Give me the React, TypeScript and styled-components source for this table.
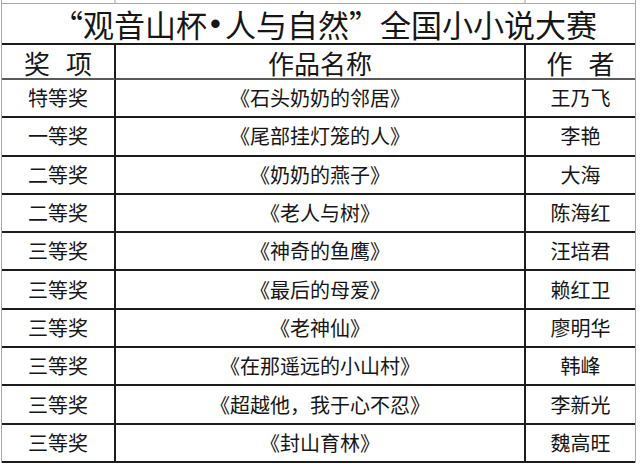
import { Fragment } from "react";
import styled, { createGlobalStyle } from "styled-components";

const GlobalStyle = createGlobalStyle`
  html, body {
    margin: 0;
    padding: 0;
    background: #ffffff;
  }
  body {
    width: 640px;
    height: 464px;
    overflow: hidden;
    font-family: "Noto Sans CJK SC", "Noto Sans", sans-serif;
    color: #161616;
  }
`;

const Sheet = styled.div`
  display: grid;
  grid-template-columns: 114px 410px 109px;
  grid-template-rows: 3px 42px 35px repeat(10, 38.3px);
  margin-left: 1px;
  width: 633px;
  border-left: 1px solid #a8a8a8;
  border-right: 1px solid #a8a8a8;
`;

const Sliver = styled.div<{ $last?: boolean }>`
  box-sizing: border-box;
  border-right: ${(p) => (p.$last ? "none" : "2px solid #d0d0d0")};
`;

const TitleCell = styled.div`
  grid-column: 1 / span 3;
  box-sizing: border-box;
  border-top: 1px solid #a8a8a8;
  border-bottom: 2px solid #1c1c1c;
  display: flex;
  align-items: center;
  justify-content: center;
  font-size: 31px;
  line-height: 1;
  padding-left: 12px;
`;

const Dot = styled.span`
  font-family: "Liberation Sans", Arial, sans-serif;
  margin: 0 4px 0 3px;
`;

const HeadCell = styled.div<{ $last?: boolean }>`
  box-sizing: border-box;
  border-right: ${(p) => (p.$last ? "none" : "2px solid #1c1c1c")};
  border-bottom: 2px solid #5a5a5a;
  display: flex;
  align-items: center;
  justify-content: center;
  font-size: 26px;
  line-height: 1;
  word-spacing: 10px;
  padding-top: 2px;
`;

const Cell = styled.div<{ $last?: boolean }>`
  box-sizing: border-box;
  border-right: ${(p) => (p.$last ? "none" : "2px solid #1c1c1c")};
  border-bottom: 2px solid #1c1c1c;
  display: flex;
  align-items: center;
  justify-content: center;
  font-size: 20px;
  line-height: 1;
  white-space: nowrap;
`;

const awards = [
  { prize: "特等奖", work: "《石头奶奶的邻居》", author: "王乃飞" },
  { prize: "一等奖", work: "《尾部挂灯笼的人》", author: "李艳" },
  { prize: "二等奖", work: "《奶奶的燕子》", author: "大海" },
  { prize: "二等奖", work: "《老人与树》", author: "陈海红" },
  { prize: "三等奖", work: "《神奇的鱼鹰》", author: "汪培君" },
  { prize: "三等奖", work: "《最后的母爱》", author: "赖红卫" },
  { prize: "三等奖", work: "《老神仙》", author: "廖明华" },
  { prize: "三等奖", work: "《在那遥远的小山村》", author: "韩峰" },
  { prize: "三等奖", work: "《超越他，我于心不忍》", author: "李新光" },
  { prize: "三等奖", work: "《封山育林》", author: "魏高旺" },
];

function App() {
  return (
    <>
      <GlobalStyle />
      <Sheet lang="zh-CN">
        <Sliver />
        <Sliver />
        <Sliver $last />
        <TitleCell>
          “观音山杯<Dot>•</Dot>人与自然”全国小小说大赛
        </TitleCell>
        <HeadCell>奖 项</HeadCell>
        <HeadCell>作品名称</HeadCell>
        <HeadCell $last>作 者</HeadCell>
        {awards.map((row, i) => (
          <Fragment key={i}>
            <Cell>{row.prize}</Cell>
            <Cell>{row.work}</Cell>
            <Cell $last>{row.author}</Cell>
          </Fragment>
        ))}
      </Sheet>
    </>
  );
}

export default App;
